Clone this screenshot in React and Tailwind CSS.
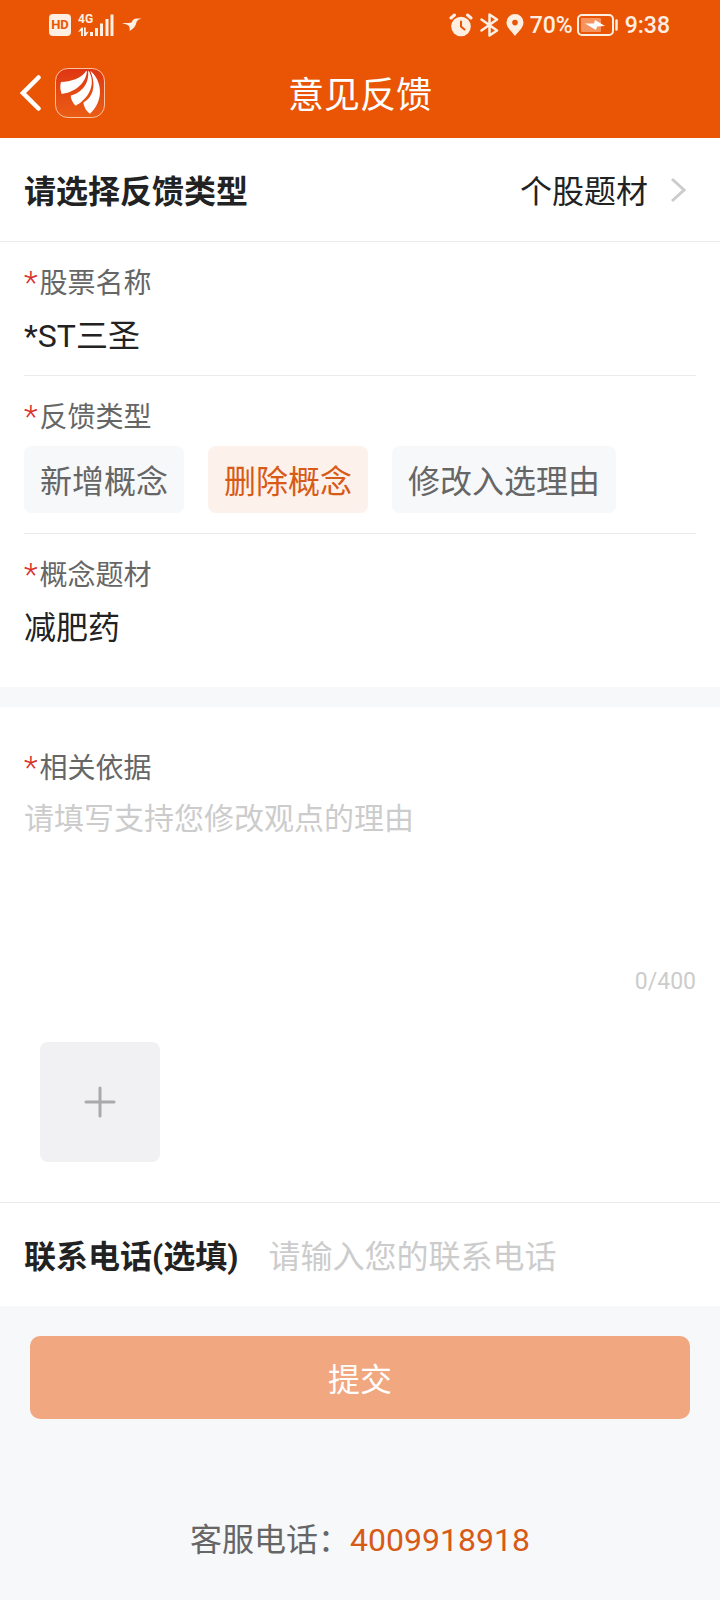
import React, { useState } from 'react';

const feedbackTypes = [
    { id: 'add', label: '新增概念' },
    { id: 'remove', label: '删除概念' },
    { id: 'edit', label: '修改入选理由' }
];

const StatusBar = () => (
    <div className="flex h-12 items-center justify-between pl-[49px] pr-[50px] pt-0.5 text-[#ffeee2]">
        <div className="flex items-center">
            <span className="flex h-[22px] w-[22px] items-center justify-center rounded bg-[#ffeee2] text-[13px] font-bold text-[#e95504]">HD</span>
            <svg className="ml-[7px] h-6 w-9" viewBox="0 0 36 24" fill="currentColor">
                <text x="0" y="10" fontSize="12" fontWeight="700">4G</text>
                <path d="M0 19l3.500-4.500h1.500V23H3v-5l-3 1zM6 14.500h1.800v5l3-1-3 4.500H6z" />
                <path d="M12 19h3v4h-3zM17 15h3v8h-3zM22 10.500h3V23h-3zM27.500 6h3v17h-3zM32.500 1.500h3V23h-3z" />
            </svg>
            <svg className="ml-2 h-[14px] w-5" viewBox="0 0 20 14" fill="currentColor">
                <path d="M0 5C4 5.200 7 5.200 9.500 4.500L11 2C12.500 .5 15 .2 20 .6C17 1.300 15.500 2 14.500 4C14 8 11.500 11 7.500 13C8 10.500 7.500 9.500 7 8C5 6.500 3 6 0 5z" />
            </svg>
        </div>
        <div className="flex items-center text-[23px] font-medium leading-none">
            <svg className="h-6 w-6" viewBox="0 0 24 24" fill="none" stroke="currentColor" strokeLinecap="round">
                <circle cx="12" cy="13.500" r="9.800" fill="currentColor" stroke="none" />
                <path d="M2 5L5.500 2M22 5L18.500 2" strokeWidth="3" />
                <path d="M12 8.500V13.500l3.500 3" stroke="#e95504" strokeWidth="2" />
            </svg>
            <svg className="ml-[7px] h-6 w-5" viewBox="0 0 20 24" fill="none" stroke="currentColor" strokeWidth="2.500" strokeLinejoin="round" strokeLinecap="round">
                <path d="M1.500 6.500L17 17.500L9.500 22.500V1.500L17 6.500L1.500 17.500" />
            </svg>
            <svg className="ml-[6px] h-6 w-[18px]" viewBox="0 0 18 24" fill="currentColor">
                <path fillRule="evenodd" d="M9 1a8.500 8.500 0 0 1 8.500 8.500C17.500 14.500 12.500 18.500 9 23C5.500 18.500 .5 14.500 .5 9.500A8.500 8.500 0 0 1 9 1zM9 6.800a2.800 2.800 0 1 0 0 5.600a2.800 2.800 0 0 0 0-5.600z" />
            </svg>
            <span className="ml-[6px]">70%</span>
            <svg className="ml-1 h-[22px] w-[42px]" viewBox="0 0 42 22" fill="none">
                <rect x="1" y="1" width="35" height="20" rx="4" stroke="currentColor" strokeWidth="2" />
                <rect x="4" y="4" width="20" height="14" rx="1" fill="#f6935f" />
                <path d="M8 9.500L17 9.500L18 6L28 12L20 12.500L19 16L8 9.500z" fill="#fff" />
                <path d="M39.500 6.500v9" stroke="currentColor" strokeWidth="2.500" strokeLinecap="round" />
            </svg>
            <span className="ml-[6px]">9:38</span>
        </div>
    </div>
);

const Logo = () => (
    <svg className="h-[50px] w-[50px]" viewBox="0 0 150 150">
        <defs>
            <linearGradient id="logo-bg" x1="0" y1="0" x2="0" y2="1">
                <stop offset="0" stopColor="#df3614" />
                <stop offset="1" stopColor="#ea5e14" />
            </linearGradient>
        </defs>
        <rect x="1.500" y="1.500" width="147" height="147" rx="37" fill="url(#logo-bg)" stroke="#fbc3a0" strokeWidth="3" />
        <g fill="#fff">
            <path d="M93 10C78 32 48 41 18 42C14 54 16 66 20 78C58 74 92 48 96 10z" />
            <path d="M99 8C104 46 80 74 47 83C48 95 54 105 62 113C92 98 126 56 103 12z" />
            <path d="M106 9C125 52 114 88 85 104C87 118 95 130 105 137C142 104 146 48 110 12z" />
        </g>
    </svg>
);

const Required = () => <span className="mr-0.5 text-[32px] font-light text-[#d9302c]">*</span>;

const labelClass = 'block h-10 text-[28px] leading-9 text-[#666]';

const FieldLabel = ({ htmlFor, children }) => (
    <label htmlFor={htmlFor} className={labelClass}>
        <Required />{children}
    </label>
);

export default function App() {
    const [type, setType] = useState('remove');
    const [reason, setReason] = useState('');

    return (
        <div className="min-h-screen bg-[#f7f8fa] font-[Roboto,'Noto_Sans_CJK_SC',sans-serif] text-[32px] text-[#222]">
            <header className="bg-[#e95504] text-white">
                <StatusBar />
                <div className="grid h-[90px] grid-cols-[1fr_auto_1fr] items-center px-5">
                    <div className="flex items-center gap-[14px]">
                        <button type="button" aria-label="返回">
                            <svg className="h-9 w-[21px]" viewBox="0 0 21 36" fill="none" stroke="currentColor" strokeWidth="4.500" strokeLinecap="round">
                                <path d="M18.500 2.500L3 18L18.500 33.500" />
                            </svg>
                        </button>
                        <Logo />
                    </div>
                    <h1 className="pt-1.5 text-[36px] leading-none">意见反馈</h1>
                </div>
            </header>

            <form onSubmit={(e) => e.preventDefault()}>
                <div className="flex h-[104px] items-center border-b border-[#ebebeb] bg-white pl-6 pr-[34px]">
                    <label htmlFor="category" className="flex-1 pt-1 font-bold">请选择反馈类型</label>
                    <select id="category" className="appearance-none bg-transparent pt-1">
                        <option>个股题材</option>
                    </select>
                    <svg className="ml-[22px] h-[26px] w-[15px]" viewBox="0 0 15 26" fill="none" stroke="#ccc" strokeWidth="3">
                        <path d="M1 2L13 13L1 24" />
                    </svg>
                </div>

                <section className="bg-white px-6">
                    <div className="border-b border-[#ebebeb] pb-5 pt-[22px]">
                        <FieldLabel htmlFor="stock">股票名称</FieldLabel>
                        <input id="stock" defaultValue="*ST三圣" className="mt-2 block h-[43px] w-full pt-1 outline-none" />
                    </div>
                    <div role="radiogroup" aria-labelledby="type-label" className="border-b border-[#ebebeb] pb-5 pt-[22px]">
                        <p id="type-label" className={labelClass}><Required />反馈类型</p>
                        <div className="mt-2 flex gap-6">
                            {feedbackTypes.map((item) => (
                                <label
                                    key={item.id}
                                    className="flex h-[67px] cursor-pointer items-center rounded-lg bg-[#f7f8fa] px-4 pt-1 text-[#666] has-checked:bg-[#fdf1eb] has-checked:text-[#d75a16]"
                                >
                                    <input
                                        type="radio"
                                        name="type"
                                        className="w-0 appearance-none"
                                        checked={type === item.id}
                                        onChange={() => setType(item.id)}
                                    />
                                    {item.label}
                                </label>
                            ))}
                        </div>
                    </div>
                    <div className="pb-10 pt-[22px]">
                        <FieldLabel htmlFor="concept">概念题材</FieldLabel>
                        <input id="concept" defaultValue="减肥药" className="mt-2 block h-[43px] w-full pt-1 outline-none" />
                    </div>
                </section>

                <section className="mt-5 border-b border-[#ebebeb] bg-white px-6 pb-10 pt-[42px]">
                    <FieldLabel htmlFor="reason">相关依据</FieldLabel>
                    <textarea
                        id="reason"
                        maxLength={400}
                        value={reason}
                        onChange={(e) => setReason(e.target.value)}
                        placeholder="请填写支持您修改观点的理由"
                        className="mt-2 block h-[165px] w-full resize-none text-[30px] leading-[43px] outline-none placeholder:text-[#ccc]"
                    />
                    <p className="text-right text-[23px] leading-10 text-[#ccc]">{reason.length}/400</p>
                    <button type="button" aria-label="添加图片" className="ml-4 mt-10 flex h-[120px] w-[120px] items-center justify-center rounded-lg bg-[#f1f1f4]">
                        <svg className="h-8 w-8" viewBox="0 0 32 32" stroke="#aaa" strokeWidth="3" strokeLinecap="round">
                            <path d="M16 2v28M2 16h28" />
                        </svg>
                    </button>
                </section>

                <div className="flex h-[103px] items-center gap-[30px] bg-white px-6 pt-1">
                    <label htmlFor="phone" className="font-bold">联系电话(选填)</label>
                    <input id="phone" type="tel" placeholder="请输入您的联系电话" className="min-w-0 flex-1 outline-none placeholder:text-[#ccc]" />
                </div>

                <div className="px-[30px] pt-[30px]">
                    <button type="submit" className="h-[83px] w-full rounded-[10px] bg-[#f1a780] pt-1 text-white">提交</button>
                </div>
            </form>

            <footer className="pb-8 pt-[97px] text-center leading-12 text-[#666]">
                客服电话：<a href="tel:4009918918" className="text-[#d75a16]">4009918918</a>
            </footer>
        </div>
    );
}
